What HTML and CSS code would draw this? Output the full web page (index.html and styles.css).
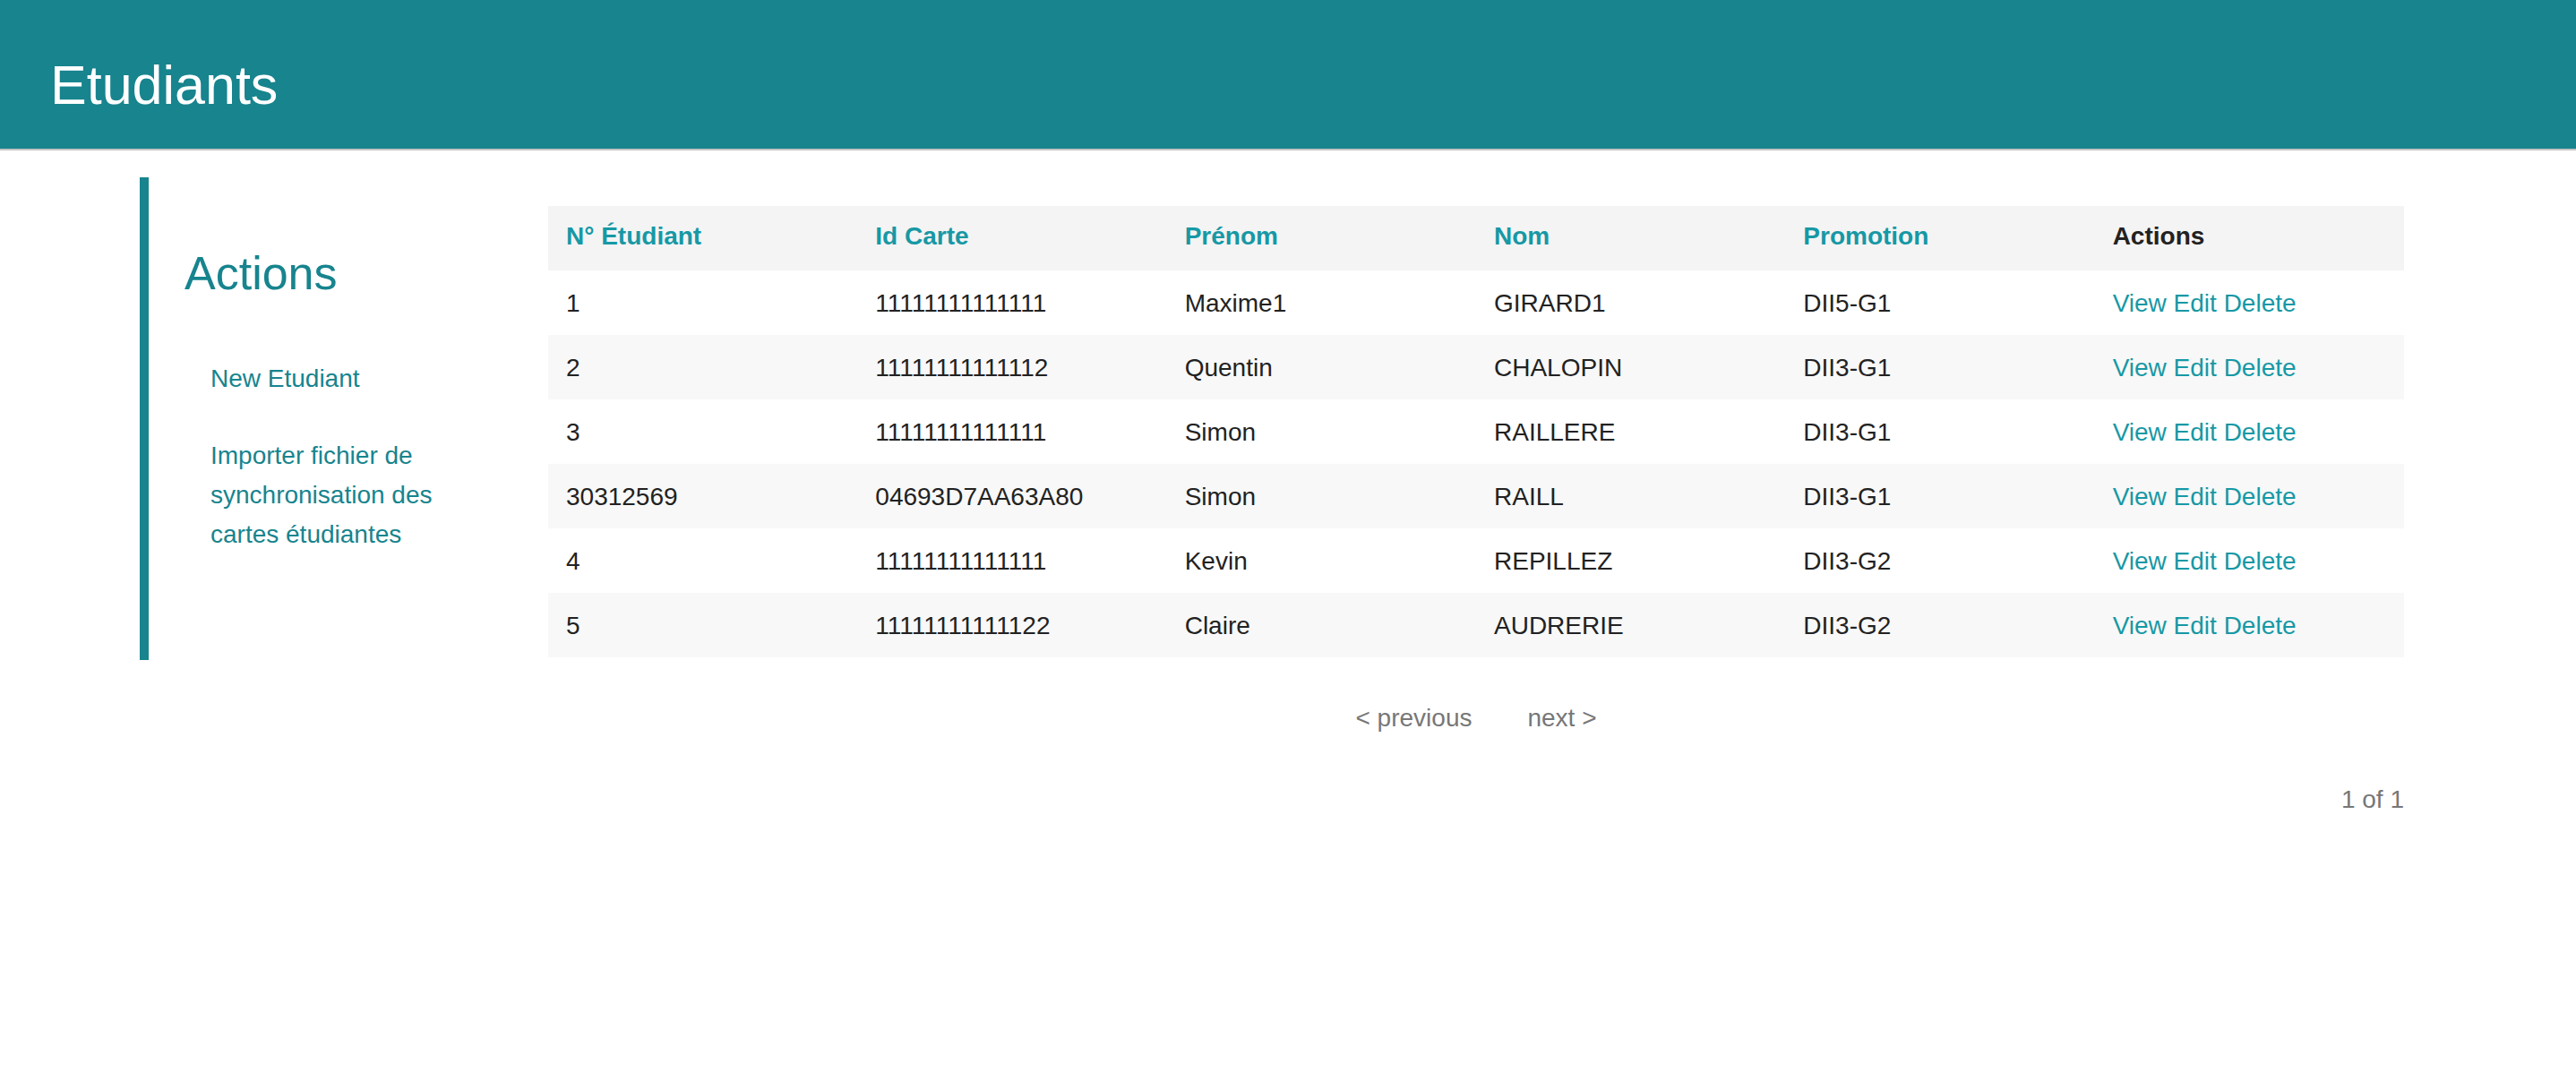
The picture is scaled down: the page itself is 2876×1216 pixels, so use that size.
FILE: index.html
```html
<!DOCTYPE html>
<html lang="fr">
<head>
<meta charset="utf-8">
<title>Etudiants</title>
<link rel="stylesheet" href="styles.css">
</head>
<body>
<header class="top-bar">
  <h1 class="title">Etudiants</h1>
</header>
<div class="page">
  <nav class="side-nav">
    <h3 class="heading">Actions</h3>
    <ul class="side-links">
      <li><a href="#">New Etudiant</a></li>
      <li><a href="#">Importer fichier de synchronisation des cartes étudiantes</a></li>
    </ul>
  </nav>
  <main class="content">
    <table class="grid">
      <thead>
        <tr>
          <th><a href="#">N° Étudiant</a></th>
          <th><a href="#">Id Carte</a></th>
          <th><a href="#">Prénom</a></th>
          <th><a href="#">Nom</a></th>
          <th><a href="#">Promotion</a></th>
          <th>Actions</th>
        </tr>
      </thead>
      <tbody>
        <tr><td>1</td><td>11111111111111</td><td>Maxime1</td><td>GIRARD1</td><td>DII5-G1</td><td class="acts"><a href="#">View</a> <a href="#">Edit</a> <a href="#">Delete</a></td></tr>
        <tr><td>2</td><td>11111111111112</td><td>Quentin</td><td>CHALOPIN</td><td>DII3-G1</td><td class="acts"><a href="#">View</a> <a href="#">Edit</a> <a href="#">Delete</a></td></tr>
        <tr><td>3</td><td>11111111111111</td><td>Simon</td><td>RAILLERE</td><td>DII3-G1</td><td class="acts"><a href="#">View</a> <a href="#">Edit</a> <a href="#">Delete</a></td></tr>
        <tr><td>30312569</td><td>04693D7AA63A80</td><td>Simon</td><td>RAILL</td><td>DII3-G1</td><td class="acts"><a href="#">View</a> <a href="#">Edit</a> <a href="#">Delete</a></td></tr>
        <tr><td>4</td><td>11111111111111</td><td>Kevin</td><td>REPILLEZ</td><td>DII3-G2</td><td class="acts"><a href="#">View</a> <a href="#">Edit</a> <a href="#">Delete</a></td></tr>
        <tr><td>5</td><td>11111111111122</td><td>Claire</td><td>AUDRERIE</td><td>DII3-G2</td><td class="acts"><a href="#">View</a> <a href="#">Edit</a> <a href="#">Delete</a></td></tr>
      </tbody>
    </table>
    <div class="paginator">
      <ul class="pagination">
        <li>&lt; previous</li>
        <li>next &gt;</li>
      </ul>
      <p class="counter">1 of 1</p>
    </div>
  </main>
</div>
</body>
</html>
```

FILE: styles.css
```css
* { box-sizing: border-box; }

html, body {
  margin: 0;
  padding: 0;
  background: #ffffff;
  font-family: "Liberation Sans", Arial, Helvetica, sans-serif;
  color: #222222;
}

a { text-decoration: none; }

.top-bar {
  height: 168px;
  background: #17848e;
  border-bottom: 2px solid #c4c4c4;
  padding: 65px 0 0 56px;
}

.title {
  margin: 0;
  font-size: 61px;
  line-height: 61px;
  font-weight: 400;
  color: #ffffff;
}

.page {
  display: flex;
  align-items: flex-start;
  padding: 30px 192px 0 156px;
}

.side-nav {
  flex: 0 0 456px;
  width: 456px;
  height: 539px;
  border-left: 10px solid #17848e;
  padding: 79px 60px 0 40px;
}

.heading {
  margin: 0;
  font-size: 52px;
  line-height: 57px;
  font-weight: 400;
  color: #17848e;
}

.side-links {
  list-style: none;
  margin: 67px 0 0 0;
  padding: 0 0 0 29px;
}

.side-links li {
  font-size: 28px;
  line-height: 44px;
  margin-bottom: 42px;
}

.side-links li:last-child { margin-bottom: 0; }

.side-links a { color: #17848e; }

.content {
  flex: 1 1 auto;
  padding-top: 32px;
}

.grid {
  width: 100%;
  border-collapse: collapse;
  table-layout: fixed;
  font-size: 28px;
}

.grid thead tr { background: #f4f4f4; }

.grid th {
  text-align: left;
  font-weight: 700;
  line-height: 42px;
  padding: 13px 20px 17px 20px;
  color: #222222;
}

.grid th a { color: #1798a5; }

.grid td {
  line-height: 42px;
  padding: 16px 20px 14px 20px;
  color: #222222;
  white-space: nowrap;
}

.grid tbody tr:nth-child(even) { background: #f8f8f8; }

.grid td.acts a { color: #1798a5; }

.paginator {
  margin-top: 47px;
  display: flex;
  flex-direction: column;
}

.pagination {
  list-style: none;
  margin: 0;
  padding: 0;
  display: flex;
  justify-content: center;
  gap: 62px;
  font-size: 28px;
  line-height: 42px;
  color: #777777;
}

.counter {
  margin: 49px 0 0 0;
  text-align: right;
  font-size: 28px;
  line-height: 42px;
  color: #777777;
}
```
